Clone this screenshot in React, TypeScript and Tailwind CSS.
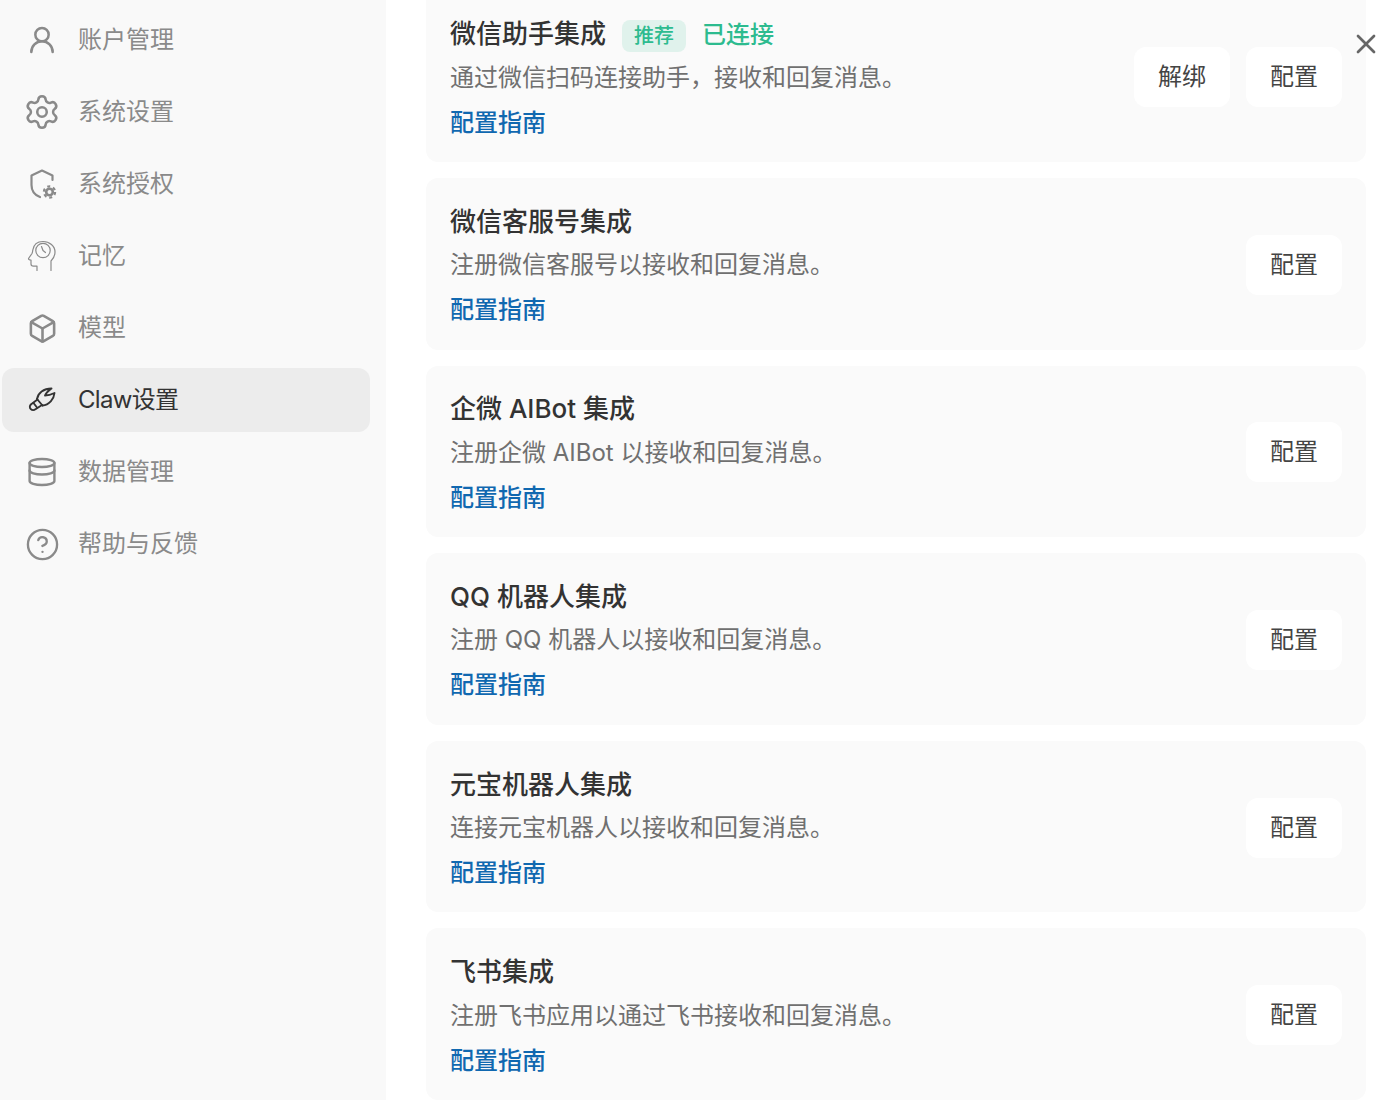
import { Box, CircleHelp, Settings, UserRound, X } from "lucide-react"

const fontStack =
  "font-['Inter','Noto_Sans_CJK_SC',sans-serif]"

const ShieldGearIcon = () => (
  <svg width="30" height="30" viewBox="0 0 30 30" fill="none" stroke="currentColor" strokeWidth="2.2" strokeLinecap="round" strokeLinejoin="round" className="shrink-0">
    <path d="M13 28C7.500 26 4.500 21.500 4.500 16V6.500L15 1.500 25.500 6.500V11" />
    <circle cx="22.500" cy="23" r="3.300" strokeWidth="2.600" />
    <circle cx="22.500" cy="23" r="5.600" strokeWidth="2.200" strokeDasharray="3 2.860" strokeLinecap="butt" />
  </svg>
)

const MemoryIcon = () => (
  <svg width="30" height="32" viewBox="0 0 30 32" fill="none" stroke="currentColor" strokeWidth="1.200" strokeLinecap="round" strokeLinejoin="round" className="shrink-0">
    <path d="M24 30.500V21c2.500-2.500 4-5.500 4-9C28 6 22.500 1.500 16 1.500S6.500 5.500 5.800 10c-.1 1-.3 2.500-.8 3.500l-3.500 5c0 1 1.500 1.500 2.500 1.500v4c0 1.500 1 2.200 2.500 2.200H10v4.300" />
    <circle cx="16" cy="10.500" r="7.200" />
    <path d="M14.500 6.500 16 10.500l2.500 2" />
  </svg>
)

const ClawIcon = () => (
  <svg width="30" height="30" viewBox="0 0 30 30" fill="none" stroke="currentColor" strokeWidth="1.900" strokeLinecap="round" strokeLinejoin="round" className="shrink-0">
    <path d="M10 14C11 8 16.500 3.500 24.500 3.500 22 5.500 19 7.500 18 10.500 21 10.500 24.500 9.500 27.500 8 27 14 22 20 15.500 20.500" />
    <path d="M10 14 15.500 20.500" />
    <path d="M10.500 14.500 3.800 19.500A3.300 3.300 0 0 0 8.500 24.200L15 20" />
    <path d="M6.500 18 10 22.500" />
  </svg>
)

const DatabaseIcon = () => (
  <svg width="30" height="30" viewBox="0 0 30 30" fill="none" stroke="currentColor" strokeWidth="2.400" strokeLinecap="round" strokeLinejoin="round" className="shrink-0">
    <ellipse cx="15" cy="6" rx="12.400" ry="4" />
    <path d="M2.600 6v18c0 2.200 5.600 4 12.400 4s12.400-1.800 12.400-4V6" />
    <path d="M2.600 13.500c0 2.200 5.600 4 12.400 4s12.400-1.800 12.400-4" />
  </svg>
)

const navItems = [
  { label: "账户管理", icon: <UserRound size={32} strokeWidth={1.9} className="shrink-0" /> },
  { label: "系统设置", icon: <Settings size={38} strokeWidth={1.6} className="shrink-0" /> },
  { label: "系统授权", icon: <ShieldGearIcon /> },
  { label: "记忆", icon: <MemoryIcon /> },
  { label: "模型", icon: <Box size={31} strokeWidth={2} className="shrink-0" /> },
  { label: "Claw设置", icon: <ClawIcon />, active: true },
  { label: "数据管理", icon: <DatabaseIcon /> },
  { label: "帮助与反馈", icon: <CircleHelp size={35} strokeWidth={1.6} className="shrink-0" /> },
]

const integrations = [
  { title: "微信助手集成", desc: "通过微信扫码连接助手，接收和回复消息。", connected: true },
  { title: "微信客服号集成", desc: "注册微信客服号以接收和回复消息。" },
  { title: "企微 AIBot 集成", desc: "注册企微 AIBot 以接收和回复消息。" },
  { title: "QQ 机器人集成", desc: "注册 QQ 机器人以接收和回复消息。" },
  { title: "元宝机器人集成", desc: "连接元宝机器人以接收和回复消息。" },
  { title: "飞书集成", desc: "注册飞书应用以通过飞书接收和回复消息。" },
]

function NavItem({ label, icon, active }: { label: string; icon: React.ReactNode; active?: boolean }) {
  return (
    <div
      className={`flex h-16 items-center rounded-xl pl-[25px] text-2xl ${
        active ? "bg-[#ececec] tracking-[-0.7px] text-[#333333]" : "text-[#8a8a8a]"
      }`}
    >
      <span className="flex w-[30px] items-center justify-center">{icon}</span>
      <span className="ml-[21px]">{label}</span>
    </div>
  )
}

function IntegrationCard({ title, desc, connected }: { title: string; desc: string; connected?: boolean }) {
  return (
    <div className="flex h-[171.67px] items-center justify-between rounded-xl bg-[#fafafa] px-6">
      <div className="pt-[4px]">
        <div className="flex h-[38px] items-center">
          <h3 className="text-[26px] font-medium text-[#333333]">{title}</h3>
          {connected && (
            <>
              <span className="mt-1 ml-4 flex h-8 w-16 items-center justify-center rounded-lg bg-[#e0f2ec] text-xl font-medium text-[#2dbb8f]">
                推荐
              </span>
              <span className="mt-[2px] ml-4 text-2xl font-medium text-[#2dbb8f]">已连接</span>
            </>
          )}
        </div>
        <p className="mt-[6px] h-[38px] text-2xl leading-[38px] text-[#707070]">{desc}</p>
        <a className="mt-[7px] block text-2xl leading-[38px] font-medium text-[#1068b0]">配置指南</a>
      </div>
      <div className="flex gap-4 pt-[2px]">
        {connected && (
          <button className="h-[60px] w-24 rounded-xl bg-white text-2xl text-[#444444]">解绑</button>
        )}
        <button className="h-[60px] w-24 rounded-xl bg-white text-2xl text-[#444444]">配置</button>
      </div>
    </div>
  )
}

export default function App() {
  return (
    <div className={`relative flex h-[1100px] overflow-hidden bg-white ${fontStack}`}>
      <aside className="w-[386px] shrink-0 bg-[#f9f9f9] pt-2 pr-4 pl-[2px]">
        <div className="flex flex-col gap-2">
          {navItems.map((item) => (
            <NavItem key={item.label} {...item} />
          ))}
        </div>
      </aside>

      <main className="-mt-[9.67px] ml-10 flex w-[940px] flex-col gap-4">
        {integrations.map((item) => (
          <IntegrationCard key={item.title} {...item} />
        ))}
      </main>

      <button className="absolute top-[28px] left-[1350px] text-[#666666]">
        <X size={32} strokeWidth={2} />
      </button>
    </div>
  )
}
